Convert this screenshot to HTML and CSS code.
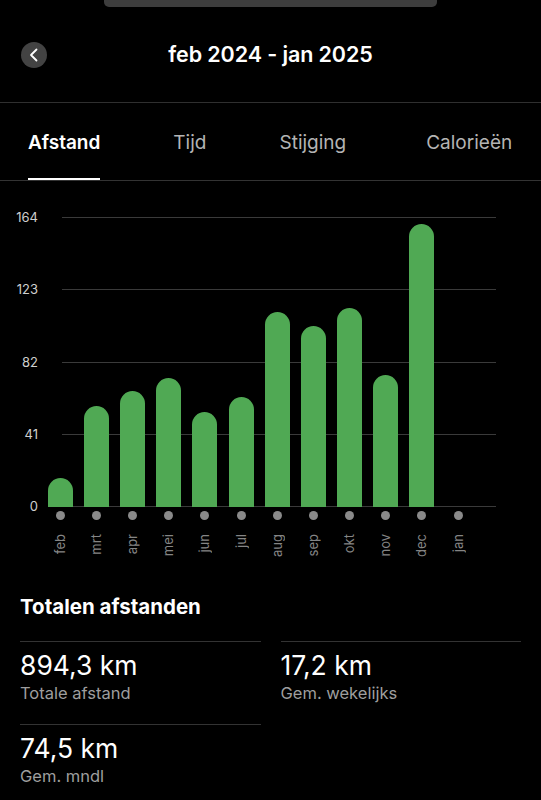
FILE: index.html
```html
<!DOCTYPE html>
<html lang="nl">
<head>
  <meta charset="UTF-8">
  <title>Afstand per maand</title>
  <link rel="stylesheet" href="styles.css">
</head>
<body>
<div class="grabber"></div>

<div class="header">
  <div class="back">
    <svg width="26" height="26" viewBox="0 0 26 26">
      <path d="M15.5 7.5 L10 13 L15.5 18.5" fill="none" stroke="#fff" stroke-width="1.8" stroke-linecap="round" stroke-linejoin="round"/>
    </svg>
  </div>
  <h1 class="title">feb 2024 - jan 2025</h1>
  <div></div>
</div>

<div class="tabs">
  <div class="tab active">Afstand</div>
  <div class="tab">Tijd</div>
  <div class="tab">Stijging</div>
  <div class="tab last">Calorieën</div>
</div>

<div class="chart">
  <div class="plot">
    <!-- rasterlijnen met y-labels -->
    <div class="grid">
      <div class="row"><span>164</span><i></i></div>
      <div class="row"><span>123</span><i></i></div>
      <div class="row"><span>82</span><i></i></div>
      <div class="row"><span>41</span><i></i></div>
      <div class="row"><span>0</span><i></i></div>
    </div>
    <!-- staven, hoogte = km * 1.762 -->
    <div class="bars">
      <div class="col"><div class="bar" style="height:29px"></div></div>
      <div class="col"><div class="bar" style="height:101px"></div></div>
      <div class="col"><div class="bar" style="height:116px"></div></div>
      <div class="col"><div class="bar" style="height:129px"></div></div>
      <div class="col"><div class="bar" style="height:95px"></div></div>
      <div class="col"><div class="bar" style="height:110px"></div></div>
      <div class="col"><div class="bar" style="height:195px"></div></div>
      <div class="col"><div class="bar" style="height:181px"></div></div>
      <div class="col"><div class="bar" style="height:199px"></div></div>
      <div class="col"><div class="bar" style="height:132px"></div></div>
      <div class="col"><div class="bar" style="height:283px"></div></div>
      <div class="col"></div>
    </div>
  </div>
  <div class="xaxis">
    <div class="tick"><b></b><span>feb</span></div>
    <div class="tick"><b></b><span>mrt</span></div>
    <div class="tick"><b></b><span>apr</span></div>
    <div class="tick"><b></b><span>mei</span></div>
    <div class="tick"><b></b><span>jun</span></div>
    <div class="tick"><b></b><span>jul</span></div>
    <div class="tick"><b></b><span>aug</span></div>
    <div class="tick"><b></b><span>sep</span></div>
    <div class="tick"><b></b><span>okt</span></div>
    <div class="tick"><b></b><span>nov</span></div>
    <div class="tick"><b></b><span>dec</span></div>
    <div class="tick"><b></b><span>jan</span></div>
  </div>
</div>

<div class="totals">
  <h2>Totalen afstanden</h2>
  <div class="stats">
    <div class="stat">
      <div class="value">894,3 km</div>
      <div class="label">Totale afstand</div>
    </div>
    <div class="stat">
      <div class="value">17,2 km</div>
      <div class="label">Gem. wekelijks</div>
    </div>
    <div class="stat">
      <div class="value">74,5 km</div>
      <div class="label">Gem. mndl</div>
    </div>
  </div>
</div>
</body>
</html>
```

FILE: styles.css
```css
body {
  margin: 0;
  background-color: #000;
  color: #fff;
  font-family: Inter, "Noto Sans", "Liberation Sans", sans-serif;
  overflow: hidden;
}

.grabber {
  width: 333px;
  height: 7px;
  margin-left: 104px;
  background-color: #3d3d3d;
  border-radius: 0 0 5px 5px;
}

.header {
  display: grid;
  grid-template-columns: 1fr auto 1fr;
  align-items: center;
  height: 95px;
  border-bottom: 1px solid #2f2f2f;
}

.back {
  width: 26px;
  height: 26px;
  margin-left: 21px;
  border-radius: 50%;
  background-color: #434343;
}

.back svg {
  display: block;
}

.title {
  margin: 0;
  font-size: 21.5px;
  font-weight: 600;
  letter-spacing: -0.1px;
  margin-top: -1px;
}

.tabs {
  display: flex;
  gap: 73px;
  padding: 0 28px;
  height: 77px;
  border-bottom: 1px solid #333;
}

.tab {
  box-sizing: border-box;
  height: 77px;
  padding-top: 29px;
  line-height: 22px;
  font-size: 19px;
  color: #b4b4b4;
}

.tab.active {
  color: #fff;
  font-weight: 600;
  border-bottom: 2px solid #fff;
}

.tab.last {
  margin-left: 7px;
}

.chart {
  padding-top: 36px;
}

.plot {
  display: grid;
  height: 290px;
}

.grid,
.bars {
  grid-area: 1 / 1;
}

.grid {
  display: flex;
  flex-direction: column;
  justify-content: space-between;
}

.row {
  display: flex;
  align-items: center;
  height: 1px;
}

.row span {
  width: 38px;
  text-align: right;
  font-size: 13px;
  line-height: 1px;
  color: #cfcfcf;
}

.row i {
  width: 434px;
  height: 1px;
  margin-left: 24px;
  background-color: #3a3a3a;
}

.bars,
.xaxis {
  display: grid;
  grid-template-columns: repeat(12, 36.2px);
  padding-left: 42px;
}

.col {
  display: flex;
  justify-content: center;
  align-items: flex-end;
}

.bar {
  width: 25px;
  background-color: #50a954;
  border-radius: 12.5px 12.5px 0 0;
}

.xaxis {
  height: 60px;
}

.tick {
  display: flex;
  flex-direction: column;
  align-items: center;
}

.tick b {
  width: 9px;
  height: 9px;
  margin-top: 4px;
  border-radius: 50%;
  background-color: #8a8a8a;
}

.tick span {
  margin-top: 14px;
  writing-mode: vertical-rl;
  transform: rotate(180deg);
  font-size: 13px;
  line-height: 13px;
  color: #858585;
}

.totals {
  padding: 28px 20px 0;
}

.totals h2 {
  margin: 0;
  font-size: 20.5px;
  line-height: 24px;
  font-weight: 700;
}

.stats {
  display: grid;
  grid-template-columns: 1fr 1fr;
  column-gap: 20px;
  margin-top: 22px;
}

.stat {
  border-top: 1px solid #333;
  padding: 8px 0 20px;
}

.value {
  font-size: 26.5px;
  line-height: 30px;
}

.label {
  margin-top: 2px;
  font-size: 16.5px;
  line-height: 22px;
  color: #9e9e9e;
}
```
